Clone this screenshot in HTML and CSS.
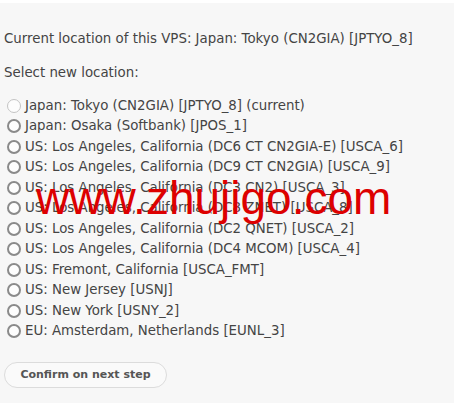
FILE: index.html
```html
<!DOCTYPE html>
<html>
<head>
<meta charset="utf-8">
<link rel="stylesheet" href="styles.css">
</head>
<body>
<div class="page">
  <p class="current">Current location of this VPS: Japan: Tokyo (CN2GIA) [JPTYO_8]</p>
  <p class="select">Select new location:</p>
  <div class="options">
    <label class="opt"><span class="radio disabled"></span>Japan: Tokyo (CN2GIA) [JPTYO_8] (current)</label>
    <label class="opt"><span class="radio"></span>Japan: Osaka (Softbank) [JPOS_1]</label>
    <label class="opt"><span class="radio"></span>US: Los Angeles, California (DC6 CT CN2GIA-E) [USCA_6]</label>
    <label class="opt"><span class="radio"></span>US: Los Angeles, California (DC9 CT CN2GIA) [USCA_9]</label>
    <label class="opt"><span class="radio"></span>US: Los Angeles, California (DC3 CN2) [USCA_3]</label>
    <label class="opt"><span class="radio"></span>US: Los Angeles, California (DC8 ZNET) [USCA_8]</label>
    <label class="opt"><span class="radio"></span>US: Los Angeles, California (DC2 QNET) [USCA_2]</label>
    <label class="opt"><span class="radio"></span>US: Los Angeles, California (DC4 MCOM) [USCA_4]</label>
    <label class="opt"><span class="radio"></span>US: Fremont, California [USCA_FMT]</label>
    <label class="opt"><span class="radio"></span>US: New Jersey [USNJ]</label>
    <label class="opt"><span class="radio"></span>US: New York [USNY_2]</label>
    <label class="opt"><span class="radio"></span>EU: Amsterdam, Netherlands [EUNL_3]</label>
  </div>
  <button class="confirm">Confirm on next step</button>
</div>
<div class="watermark">www.zhujigo.com</div>
</body>
</html>
```
FILE: styles.css
```css
html, body {
  margin: 0;
  padding: 0;
}
body {
  background: #f7f7f7;
  border-top: 3px solid #ffffff;
  font-family: "DejaVu Sans", Verdana, sans-serif;
  font-size: 13.35px;
  color: #444;
  position: relative;
  height: 400px;
  overflow: hidden;
}
.page {
  padding: 28px 4px 0 4px;
}
.current, .select {
  margin: 0;
  line-height: 16px;
}
.select {
  margin-top: 18px;
}
.options {
  margin-top: 14.5px;
  display: flex;
  flex-direction: column;
}
.opt {
  display: flex;
  align-items: center;
  height: 20.5px;
  line-height: 20.5px;
  white-space: nowrap;
}
.radio {
  box-sizing: border-box;
  width: 14px;
  height: 14px;
  border: 2px solid #8a8a8a;
  border-radius: 50%;
  background: #fdfdfd;
  margin: 0 4px 0 3px;
  flex: none;
}
.radio.disabled {
  border: 1.5px solid #c4c4c4;
}
.confirm {
  margin-top: 20px;
  width: 163px;
  height: 26px;
  border: 1px solid #dcdcdc;
  border-radius: 13px;
  background: #fafafa;
  font-family: "DejaVu Sans", Verdana, sans-serif;
  font-weight: bold;
  font-size: 11px;
  color: #555;
  padding: 0;
}
.watermark {
  position: absolute;
  left: 36px;
  top: 165px;
  font-family: "Liberation Sans", Arial, sans-serif;
  font-size: 46px;
  line-height: 60px;
  color: #dd0000;
  white-space: nowrap;
}
```
